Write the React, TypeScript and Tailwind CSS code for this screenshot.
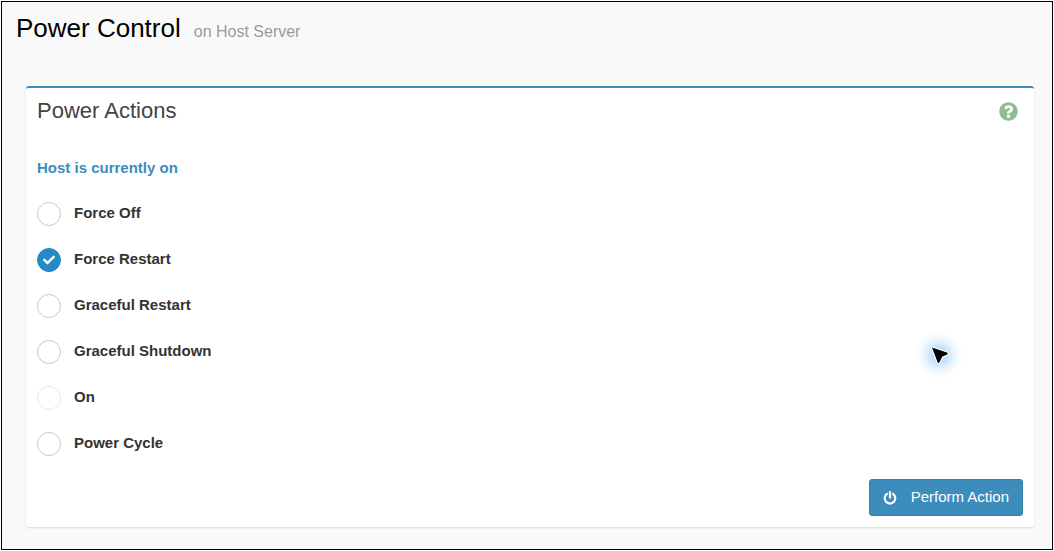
import { useState } from "react";
import { FaCheck, FaQuestionCircle } from "react-icons/fa";

const PowerIcon = () => (
  <svg className="size-3.5" viewBox="0 0 14 14" fill="none" stroke="currentColor" strokeWidth="2.2" strokeLinecap="round" aria-hidden="true">
    <path d="M4 2.9 A5.3 5.3 0 1 0 10 2.9" />
    <path d="M7 1.2 V6.6" />
  </svg>
);

const App = () => {
  const [selected, setSelected] = useState("force-restart");

  const actions = [
    { id: "force-off", label: "Force Off", disabled: false },
    { id: "force-restart", label: "Force Restart", disabled: false },
    { id: "graceful-restart", label: "Graceful Restart", disabled: false },
    { id: "graceful-shutdown", label: "Graceful Shutdown", disabled: false },
    // The host is already running
    { id: "on", label: "On", disabled: true },
    { id: "power-cycle", label: "Power Cycle", disabled: false },
  ];

  return (
    <div className="p-px bg-white font-['Liberation_Sans',Arial,sans-serif]">
      <main className="relative border border-black bg-[#f9f9f9] pb-[22px]">
        {/* Page title */}
        <header className="flex items-baseline gap-[13px] px-3.5 pt-2">
          <h1 className="text-[26px] leading-9 text-black">Power Control</h1>
          <span className="text-base text-[#999]">on Host Server</span>
        </header>

        {/* Power actions card */}
        <section className="mt-10 ml-6 mr-[18px] rounded-[3px] border-t-2 border-[#3c8dbc] bg-white shadow-[0_1px_2px_rgba(0,0,0,0.12)]">
          <div className="flex items-center justify-between pl-[11px] pr-4 pt-[7px]">
            <h2 className="text-[22px] leading-8 text-[#444]">Power Actions</h2>
            <button type="button" aria-label="Help" className="text-[#8fbc8f]">
              <FaQuestionCircle className="size-[19px]" />
            </button>
          </div>

          <form className="px-[11px] pt-[29px] pb-[11px]" onSubmit={(e) => e.preventDefault()}>
            <p className="text-[15px] leading-6 font-bold text-[#3c8dbc]">Host is currently on</p>

            <div className="pt-[11px]">
              {actions.map((action) => (
                <div key={action.id} className="flex h-[46px] items-center gap-[13px]">
                  <span className="grid size-6 place-items-center">
                    <input
                      type="radio"
                      id={action.id}
                      name="power-action"
                      checked={selected === action.id}
                      disabled={action.disabled}
                      onChange={() => setSelected(action.id)}
                      className="col-start-1 row-start-1 size-6 appearance-none rounded-full border border-[#c8c8c8] bg-white checked:border-[#2489c5] checked:bg-[#2489c5] disabled:border-[#e8e8e8]"
                    />
                    {selected === action.id && (
                      <FaCheck className="pointer-events-none z-10 col-start-1 row-start-1 size-3 text-white" />
                    )}
                  </span>
                  <label htmlFor={action.id} className="pb-0.5 text-[15px] leading-5 font-bold text-[#333]">
                    {action.label}
                  </label>
                </div>
              ))}
            </div>

            <div className="flex justify-end pt-3">
              <button
                type="submit"
                className="flex h-[37px] items-center gap-3.5 rounded-[3px] border border-[#367fa9] bg-[#3c8dbc] px-[13px] text-[15px] text-white"
              >
                <PowerIcon />
                Perform Action
              </button>
            </div>
          </form>
        </section>

        {/* Mouse pointer with its glow */}
        <svg className="pointer-events-none absolute top-[322px] right-20 size-16" viewBox="0 0 64 64" aria-hidden="true">
          <defs>
            <radialGradient id="pointer-glow">
              <stop offset="0%" stopColor="#7fbcff" stopOpacity="0.85" />
              <stop offset="35%" stopColor="#a5d0ff" stopOpacity="0.55" />
              <stop offset="65%" stopColor="#d5e9ff" stopOpacity="0.3" />
              <stop offset="100%" stopColor="#ffffff" stopOpacity="0" />
            </radialGradient>
          </defs>
          <circle cx="31" cy="31" r="27" fill="url(#pointer-glow)" />
          <path
            d="M24 23.5 L39.5 28.8 Q40.3 29.8 39.2 30.6 L34.2 32.8 L31.4 38.4 Q30.4 39.5 29.6 38.3 Z"
            fill="#000"
            stroke="#fff"
            strokeWidth="2.4"
            strokeLinejoin="round"
            paintOrder="stroke"
          />
        </svg>
      </main>
    </div>
  );
};

export default App;
